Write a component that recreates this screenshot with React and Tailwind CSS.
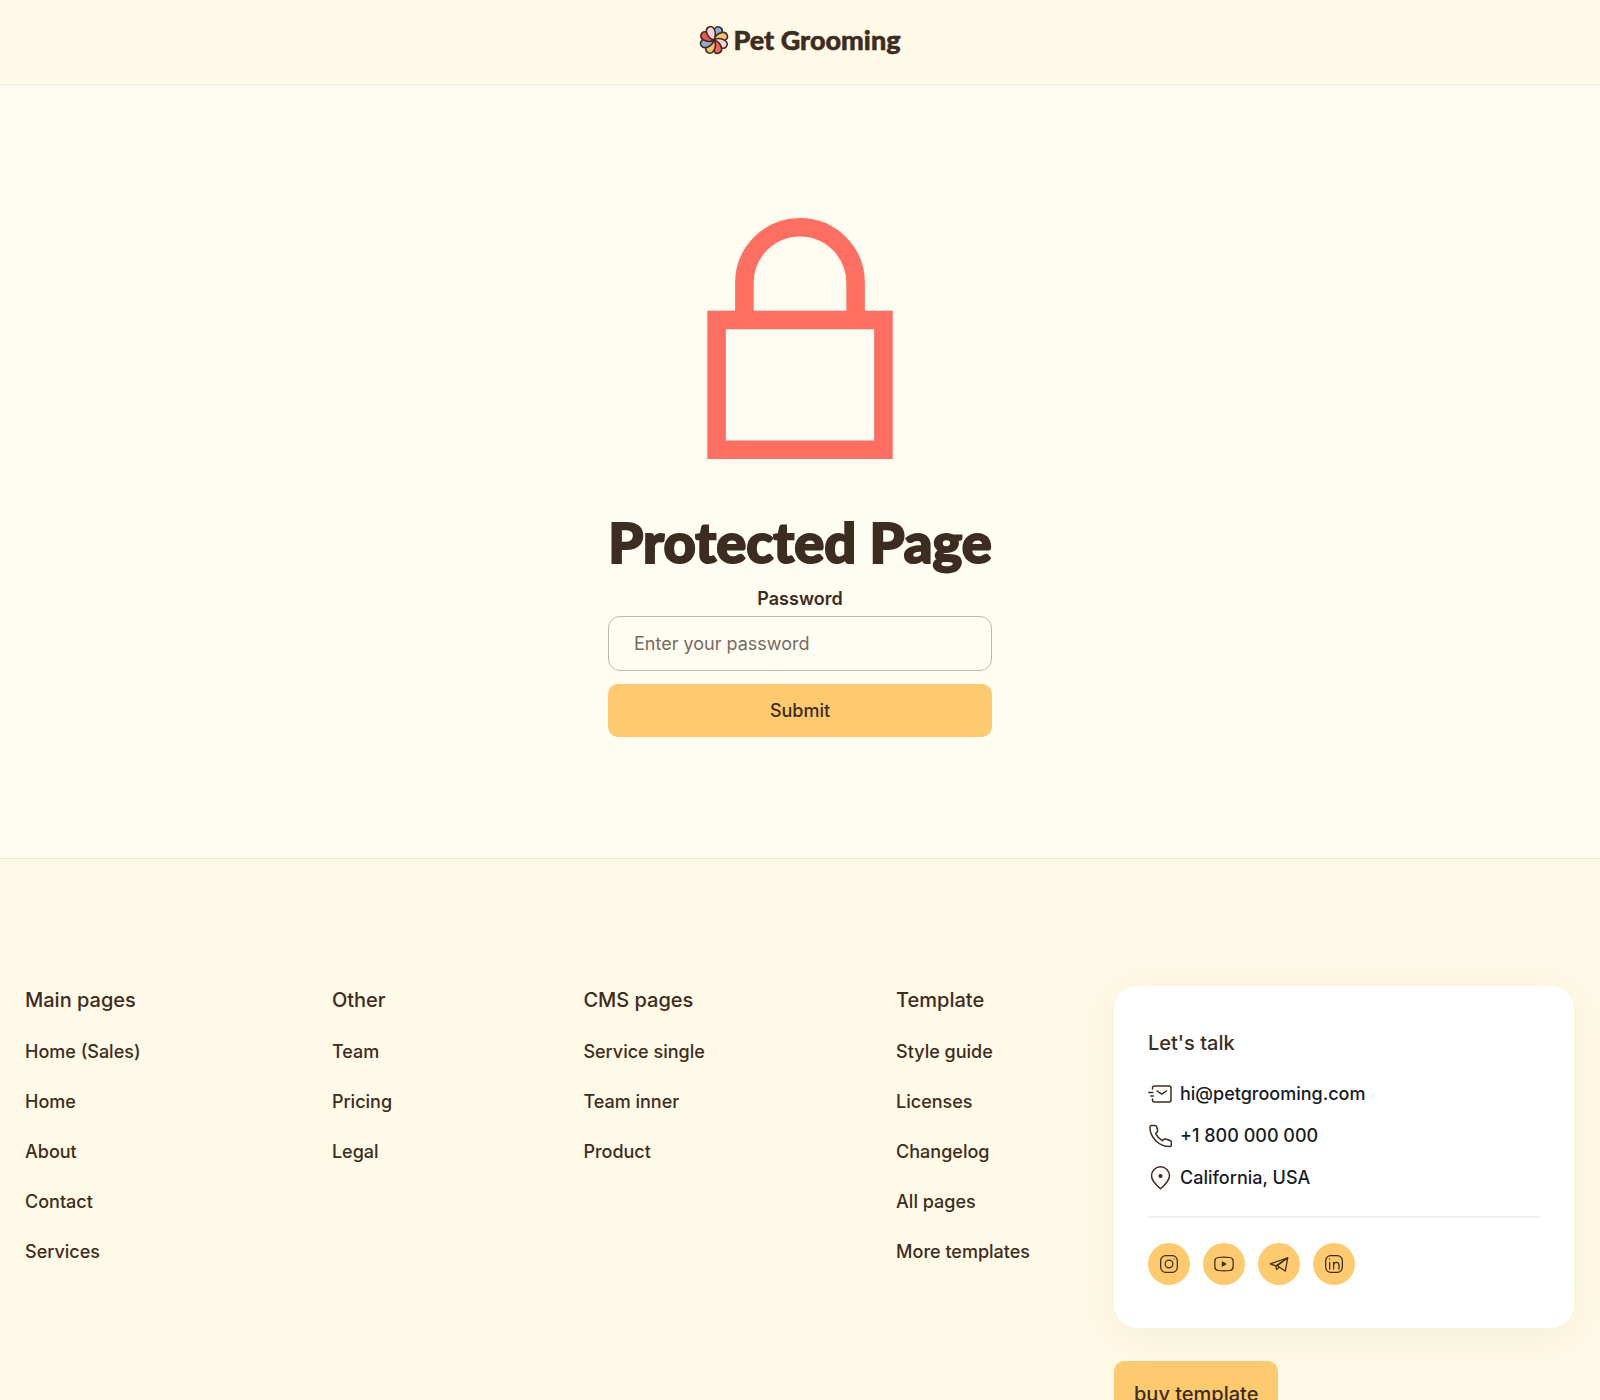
import React from 'react'

const columns = [
  { title: 'Main pages', links: ['Home (Sales)', 'Home', 'About', 'Contact', 'Services'] },
  { title: 'Other', links: ['Team', 'Pricing', 'Legal'] },
  { title: 'CMS pages', links: ['Service single', 'Team inner', 'Product'] },
  { title: 'Template', links: ['Style guide', 'Licenses', 'Changelog', 'All pages', 'More templates'] },
]

// clockwise, starting just right of the top
const petals = ['#8faadc', '#fbc268', '#fbd5da', '#f0655a', '#fbc268', '#8faadc', '#f0564a', '#fbd5da']

function Logo() {
  return (
    <svg className="size-[30px]" viewBox="0 0 30 30" aria-hidden="true">
      {petals.map((fill, idx) => (
        <path
          key={idx}
          d="M15 15C11.500 12.500 10.400 8.500 10.900 5C11.600 -.3 18.500 -.3 19.100 4.600C19.500 8.500 17.800 12 15 15Z"
          transform={`rotate(${idx * 45 + 24} 15 15)`}
          fill={fill}
          stroke="#3d2c20"
          strokeWidth="1.6"
          strokeLinejoin="round"
        />
      ))}
    </svg>
  )
}

function Icon({ className, children, strokeWidth = 1.5 }) {
  return (
    <svg
      className={className}
      viewBox="0 0 24 24"
      fill="none"
      stroke="currentColor"
      strokeWidth={strokeWidth}
      strokeLinecap="round"
      strokeLinejoin="round"
      aria-hidden="true"
    >
      {children}
    </svg>
  )
}

const contacts = [
  {
    text: 'hi@petgrooming.com',
    icon: (
      <>
        <path d="M4.500 7V6a2 2 0 0 1 2-2H21a2 2 0 0 1 2 2v12a2 2 0 0 1-2 2H6.500a2 2 0 0 1-2-2v-1" />
        <path d="M9 9l4.800 3.200L18.500 9M.8 10.500h4M2.800 14h2.500" />
      </>
    ),
  },
  {
    text: '+1 800 000 000',
    icon: (
      <path d="M3.500 1.500h3.600c.8 0 1.400.5 1.600 1.200l.9 3.600c.2.700 0 1.300-.5 1.800L7.700 9.600c1.300 2.700 3.700 5.500 6.600 7.100l1.700-1.400c.5-.4 1.100-.5 1.700-.3l4.500 1.500c.7.200 1.100.8 1.100 1.500V21c0 .9-.7 1.600-1.600 1.600C11 22.600 1.900 13.500 1.900 3.100c0-.9.700-1.600 1.600-1.600Z" />
    ),
  },
  {
    text: 'California, USA',
    icon: (
      <>
        <path d="M12.500 22.800C8 19 3.500 14.500 3.500 9.800a9 9 0 0 1 18 0c0 4.700-4.500 9.200-9 13Z" />
        <circle cx="12.5" cy="10" r="1.300" fill="currentColor" />
      </>
    ),
  },
]

const socials = [
  {
    name: 'Instagram',
    icon: (
      <>
        <rect x="2" y="2" width="20" height="20" rx="6" />
        <circle cx="12" cy="12" r="4.600" />
        <path d="M18 6h.1" />
      </>
    ),
  },
  {
    name: 'YouTube',
    icon: (
      <>
        <path d="M5 4.200c4.500-.6 9.500-.6 14 0 2.500.3 3.700 1.500 3.900 4 .2 2.500.2 5.100 0 7.600-.2 2.500-1.400 3.700-3.900 4-4.500.6-9.500.6-14 0-2.500-.3-3.700-1.500-3.900-4-.2-2.500-.2-5.100 0-7.600.2-2.500 1.400-3.700 3.900-4Z" />
        <path d="M10 9.500v5l4.200-2.500Z" fill="currentColor" />
      </>
    ),
  },
  {
    name: 'Telegram',
    icon: <path d="M22.500 4.500 1.500 11.800l6.500 2.500 14.500-9.800-3 16-9.500-6.300 12.500-9.700M8 14.300l1.200 4.500 3.200-3" />,
  },
  {
    name: 'LinkedIn',
    icon: (
      <>
        <rect x="2" y="2" width="20" height="20" rx="6" />
        <path d="M6.800 10v8M6.800 6.200v.2M11.500 18v-8M11.500 13.500c0-4.600 6.500-4.600 6.500 0V18" />
      </>
    ),
  },
]

export default function App() {
  return (
    <div className="min-h-screen bg-[#fff9e7] font-['Inter','Liberation_Sans',sans-serif] text-[18px] font-medium text-[#3d2c20]">
      <header className="flex h-[85px] items-center justify-center border-b border-[#ebe7d6]">
        <a href="#" className="flex items-center gap-1 pb-1">
          <Logo />
          <span className="font-['Lato',sans-serif] text-[27px] leading-8 font-black [-webkit-text-stroke:0.5px_#3d2c20]">
            Pet Grooming
          </span>
        </a>
      </header>

      <main className="flex flex-col items-center border-b border-[#ebe7d6] bg-[#fffdf2] px-6 pt-[133px] pb-[121px]">
        <form className="flex w-full max-w-[384px] flex-col items-center" onSubmit={e => e.preventDefault()}>
          <svg className="h-[241px] w-[186px]" viewBox="0 0 10 13" fill="none" stroke="#ff6f61" aria-hidden="true">
            <rect x="0.5" y="5.5" width="9" height="7" />
            <path d="M2 5.500v-2a3 3 0 0 1 6 0v2" />
          </svg>
          <h1 className="mt-12 font-['Lato',sans-serif] text-[56px] leading-[70px] font-black whitespace-nowrap [-webkit-text-stroke:2px_#3d2c20]">
            Protected Page
          </h1>
          <label htmlFor="password" className="mt-[9px] leading-[26px] font-semibold">Password</label>
          <input
            id="password"
            type="password"
            placeholder="Enter your password"
            className="mt-1 h-[55px] w-full rounded-xl border border-[#bdb9ad] px-[25px] font-normal outline-none placeholder:text-[#776b60]"
          />
          <button type="submit" className="mt-[13px] h-[53px] w-full rounded-[10px] bg-[#fdca6e]">Submit</button>
        </form>
      </main>

      <footer className="flex items-start gap-[84px] pt-[127px] pr-[26px] pb-20 pl-[25px]">
        <nav className="flex flex-1 justify-between">
          {columns.map(col => (
            <div key={col.title}>
              <h2 className="text-[20px] leading-7">{col.title}</h2>
              <ul className="mt-[25px] space-y-6">
                {col.links.map(link => (
                  <li key={link} className="leading-[26px]">
                    <a href="#" className="whitespace-nowrap">{link}</a>
                  </li>
                ))}
              </ul>
            </div>
          ))}
        </nav>

        <div className="w-[460px] shrink-0">
          <section className="rounded-3xl bg-white px-[34px] pt-[43px] pb-[43px] shadow-[0_8px_40px_rgba(100,120,40,0.08)]">
            <h2 className="text-[20px] leading-7">Let's talk</h2>
            <ul className="mt-6 space-y-4 text-[#181c24]">
              {contacts.map(c => (
                <li key={c.text} className="flex items-center gap-2 leading-[26px]">
                  <Icon className="size-6 text-[#3d2c20]">{c.icon}</Icon>
                  {c.text}
                </li>
              ))}
            </ul>
            <hr className="mt-[25px] border-t-2 border-[#f0f0f0]" />
            <div className="mt-[25px] flex gap-[13px]">
              {socials.map(s => (
                <a
                  key={s.name}
                  href="#"
                  aria-label={s.name}
                  className="flex size-[42px] items-center justify-center rounded-full bg-[#fdca6e]"
                >
                  <Icon className="size-5">{s.icon}</Icon>
                </a>
              ))}
            </div>
          </section>
          <a href="#" className="mt-[33px] inline-flex h-[66px] items-center rounded-[10px] bg-[#fdca6e] px-5 text-[20px]">
            buy template
          </a>
        </div>
      </footer>
    </div>
  )
}
